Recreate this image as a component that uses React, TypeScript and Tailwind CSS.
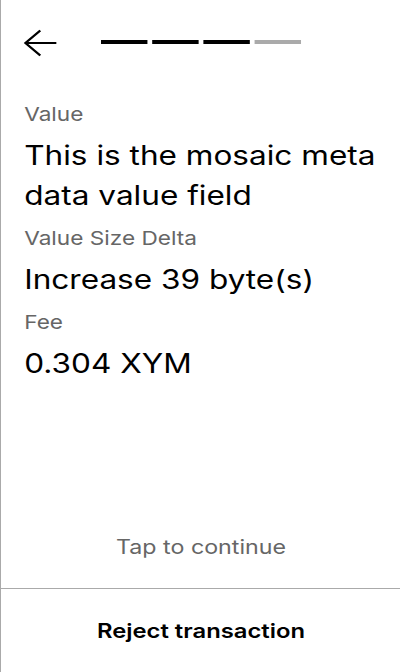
const fields = [
  { label: "Value", value: "This is the mosaic meta data value field" },
  { label: "Value Size Delta", value: "Increase 39 byte(s)" },
  { label: "Fee", value: "0.304 XYM" },
];

const steps = [true, true, true, false];

export default function App() {
  return (
    <div className="h-[672px] w-[400px] overflow-hidden border-l border-[#aaaaaa] bg-white">
      {/* the screen is drawn at 336px and stretched to the 400px frame */}
      <div
        className="flex h-[672px] w-[336px] origin-left scale-x-[1.1905] flex-col text-black"
        style={{ fontFamily: "Inter, 'Noto Sans', sans-serif" }}
      >
        {/* Header */}
        <div className="grid h-[86px] grid-cols-[1fr_auto_1fr] items-center">
          <div className="pl-[19px]">
            <svg width="28" height="28" viewBox="0 0 28 28" fill="none" stroke="black" strokeWidth="2">
              <path d="M27.5 14 H1.5" />
              <path d="M14 1.5 L1.5 14 L14 26.5" />
            </svg>
          </div>
          <div className="flex gap-[3.4px] pb-[2px]">
            {steps.map((done, i) => (
              <div
                key={i}
                className={done ? "h-[4px] w-[39.5px] bg-black" : "h-[4px] w-[39.5px] bg-[#aaaaaa]"}
              />
            ))}
          </div>
          <div />
        </div>

        {/* Details */}
        <div className="flex-1 px-[19.5px] pt-[15px]">
          {fields.map((f) => (
            <div key={f.label} className="mb-[10px]">
              <div className="text-[19px] leading-[27px] text-[#666666]">{f.label}</div>
              <div className="mt-[7px] text-[26.5px] leading-[40px]">{f.value}</div>
            </div>
          ))}
        </div>

        <div className="pb-[26px] text-center text-[19.5px] leading-[30px] text-[#666666]">
          Tap to continue
        </div>

        <button className="flex h-[84px] items-center justify-center border-t border-[#aaaaaa] text-[20px] font-semibold leading-[30px]">
          Reject transaction
        </button>
      </div>
    </div>
  );
}
